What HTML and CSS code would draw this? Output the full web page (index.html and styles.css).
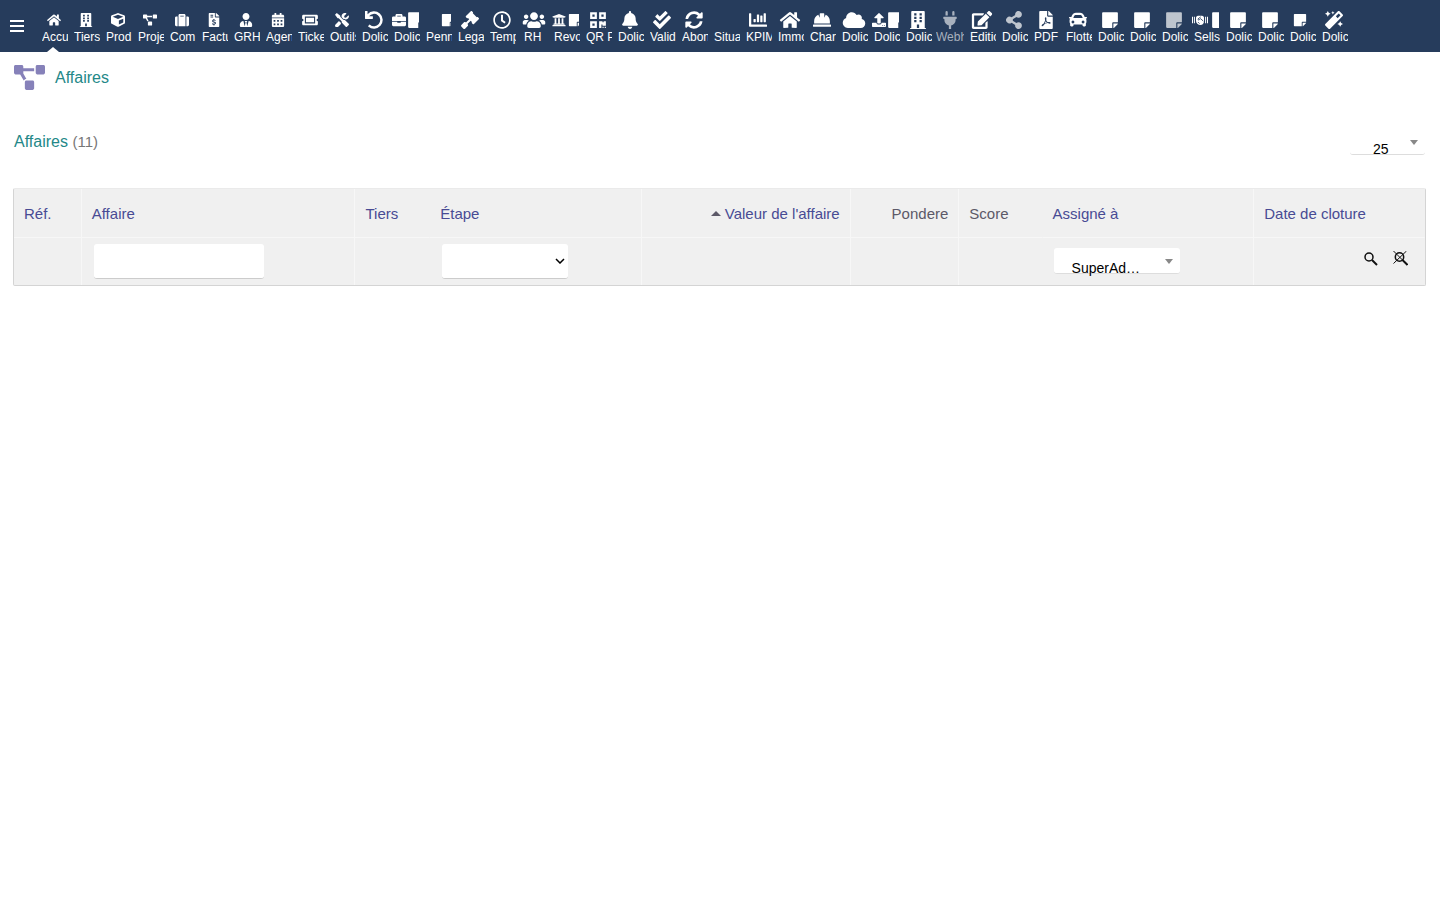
FILE: index.html
```html
<!DOCTYPE html>
<html lang="fr">
<head>
<meta charset="utf-8">
<title>Affaires</title>
<link rel="stylesheet" href="styles.css">
</head>
<body>
<svg class="sprite" aria-hidden="true">
<symbol id="home" viewBox="0 0 576 512"><path d="M280.37 148.26L96 300.11V464a16 16 0 0 0 16 16l112.06-.29a16 16 0 0 0 15.92-16V368a16 16 0 0 1 16-16h64a16 16 0 0 1 16 16v95.64a16 16 0 0 0 16 16.05L464 480a16 16 0 0 0 16-16V300L295.67 148.26a12.19 12.19 0 0 0-15.3 0zM571.6 251.47L488 182.56V44.05a12 12 0 0 0-12-12h-56a12 12 0 0 0-12 12v72.61L318.47 43a48 48 0 0 0-61 0L4.34 251.47a12 12 0 0 0-1.6 16.9l25.5 31A12 12 0 0 0 45.15 301l235.22-193.74a12.19 12.19 0 0 1 15.3 0L530.9 301a12 12 0 0 0 16.9-1.6l25.5-31a12 12 0 0 0-1.7-16.93z"/></symbol>
<symbol id="building" viewBox="0 0 448 512"><path fill-rule="evenodd" d="M436 480h-20V24c0-13-11-24-24-24H56C43 0 32 11 32 24v456H12c-7 0-12 5-12 12v20h448v-20c0-7-5-12-12-12zM116 64h64v64h-64zM116 160h64v64h-64zM116 256h64v64h-64zM268 64h64v64h-64zM268 160h64v64h-64zM268 256h64v64h-64zM192 480V384h64v96z"/></symbol>
<symbol id="cube" viewBox="0 0 512 512"><path d="M239.1 6.3l-208 78c-18.7 7-31.1 25-31.1 45v225.1c0 18.2 10.3 34.8 26.5 42.9l208 104c13.5 6.800 29.4 6.800 42.9 0l208-104c16.300-8.100 26.500-24.800 26.500-42.900V129.300c0-20-12.400-37.900-31.100-44.900l-208-78C262 2.200 250 2.200 239.100 6.300zM256 68.400l192 72v1.100l-192 78-192-78v-1.100l192-72zm32 356V275.500l160-65v133.900l-160 80z"/></symbol>
<symbol id="diagram" viewBox="0 0 640 512"><path d="M384 320H256c-17.67 0-32 14.33-32 32v128c0 17.67 14.33 32 32 32h128c17.67 0 32-14.33 32-32V352c0-17.67-14.33-32-32-32zM192 32c0-17.67-14.33-32-32-32H32C14.33 0 0 14.33 0 32v128c0 17.67 14.33 32 32 32h95.72l73.16 128.04C211.98 300.98 232.4 288 256 288h.28L192 175.51V128h224V64H192V32zM608 0H480c-17.67 0-32 14.33-32 32v128c0 17.67 14.33 32 32 32h128c17.67 0 32-14.33 32-32V32c0-17.67-14.33-32-32-32z"/></symbol>
<symbol id="suitcase" viewBox="0 0 512 512"><path d="M128 480h256V80c0-26.500-21.500-48-48-48H176c-26.500 0-48 21.500-48 48v400zm64-384h128v32H192V96zm320 80v256c0 26.500-21.500 48-48 48h-48V128h48c26.500 0 48 21.500 48 48zM96 480H48c-26.500 0-48-21.500-48-48V176c0-26.500 21.500-48 48-48h48v352z"/></symbol>
<symbol id="invoice" viewBox="0 0 384 512"><path d="M377 105L279 7c-4-5-11-7-17-7h-6v128h128v-6c0-6-2-12-7-17z"/><path fill-rule="evenodd" d="M224 136V0H24C11 0 0 11 0 24v464c0 13 11 24 24 24h336c13 0 24-11 24-24V160H248c-13 0-24-11-24-24zM64 64h96v32H64zM64 128h96v32H64zM172 216h36v28c22 2 38 9 48 16l-22 30c-20-14-68-20-68 2 0 27 98 12 98 78 0 32-24 52-56 56v30h-36v-30c-24-2-44-10-56-22l24-28c24 20 82 26 82-2 0-29-98-14-98-80 0-28 20-48 48-52z"/></symbol>
<symbol id="tie" viewBox="0 0 448 512"><path d="M224 256c70.700 0 128-57.300 128-128S294.700 0 224 0 96 57.300 96 128s57.300 128 128 128zm95.800 32.600L272 480l-32-136 32-56h-96l32 56-32 136-47.800-191.400C56.900 292 0 350.300 0 422.400V464c0 26.500 21.500 48 48 48h352c26.500 0 48-21.500 48-48v-41.600c0-72.100-56.900-130.400-128.200-133.800z"/></symbol>
<symbol id="calendar" viewBox="0 0 448 512"><path d="M448 112v48H0v-48c0-27 21-48 48-48h48V0h64v64h128V0h64v64h48c27 0 48 21 48 48z"/><path fill-rule="evenodd" d="M0 192h448v272c0 27-21 48-48 48H48c-27 0-48-21-48-48zM64 256h64v64H64zM192 256h64v64h-64zM320 256h64v64h-64zM64 384h64v64H64zM192 384h64v64h-64zM320 384h64v64h-64z"/></symbol>
<symbol id="ticket" viewBox="0 0 576 512"><path fill-rule="evenodd" d="M48 64h480c27 0 48 21 48 48v96a48 48 0 0 0 0 96v96c0 27-21 48-48 48H48c-27 0-48-21-48-48v-96a48 48 0 0 0 0-96v-96c0-27 21-48 48-48zM100 132v248h376V132zM140 172h296v168H140z"/></symbol>
<symbol id="tools" viewBox="0 0 512 512"><path d="M502 393L370 262c-18-18-44-24-68-16L192 136V96L64 0 0 64l96 128h40l110 110c-8 24-2 50 16 68l131 132c12 13 33 13 46 0l63-63c13-13 13-34 0-46z"/><path d="M508 110c-4-15-22-20-33-9l-75 74-56-10-9-56 74-75c11-11 6-29-9-33-58-13-112 9-142 55-18 31-22 67-13 100l65 65c19-5 39-5 57 3l20 10c75-2 134-57 121-124zM180 330l-34-34L19 423a64 64 0 0 0 90 90l116-116c-18-20-22-40-20-62z"/></symbol>
<symbol id="undo" viewBox="0 0 512 512"><path d="M212 224H12c-7 0-12-5-12-12V12C0 5 5 0 12 0h48c7 0 12 5 12 12v78A248 248 0 1 1 90 441c-5-5-5-13 0-17l34-34c5-4 12-4 17 0a176 176 0 1 0-26-238h97c7 0 12 5 12 12v48c0 7-5 12-12 12z"/></symbol>
<symbol id="briefcase" viewBox="0 0 512 512"><path fill-rule="evenodd" d="M384 128V80c0-27-21-48-48-48H176c-27 0-48 21-48 48v48H48c-27 0-48 21-48 48v112h512V176c0-27-21-48-48-48zM192 96h128v32H192zM320 320v24c0 4-4 8-8 8H200c-4 0-8-4-8-8v-24H0v112c0 27 21 48 48 48h416c27 0 48-21 48-48V320z"/></symbol>
<symbol id="note" viewBox="0 0 448 512"><path d="M312 320h136V56c0-13-11-24-24-24H24C11 32 0 43 0 56v400c0 13 11 24 24 24h264V344c0-13 11-24 24-24zm129 55l-98 98c-4 5-11 7-17 7h-6V352h128v6c0 6-3 12-7 17z"/></symbol>
<symbol id="gavel" viewBox="0 0 512 512"><path d="M505 200l-23-23c-9-9-24-10-34-1L336 64c9-10 8-25-1-34L312 7c-9-9-25-9-34 0L142 143c-9 9-9 25 0 34l23 23c9 9 24 10 34 1l35 35L141 330l-9-9c-13-13-34-13-46 0L10 397c-13 13-13 33 0 46l59 59c13 13 33 13 46 0l76-76c13-12 13-33 0-46l-9-9 94-93 35 35c-9 10-8 25 1 34l23 23c9 9 25 9 34 0l136-136c9-9 9-25 0-34z"/></symbol>
<symbol id="clock" viewBox="0 0 512 512"><path d="M256 8C119 8 8 119 8 256s111 248 248 248 248-111 248-248S393 8 256 8zm0 448c-110.500 0-200-89.500-200-200S145.500 56 256 56s200 89.500 200 200-89.500 200-200 200zm61.800-104.400l-84.900-61.700c-3.100-2.300-4.900-5.900-4.900-9.700V116c0-6.600 5.400-12 12-12h32c6.600 0 12 5.400 12 12v141.700l66.800 48.600c5.400 3.900 6.500 11.400 2.600 16.800L334.600 349c-3.900 5.300-11.400 6.500-16.800 2.600z"/></symbol>
<symbol id="users" viewBox="0 0 640 512"><path d="M96 224c35.300 0 64-28.700 64-64s-28.700-64-64-64-64 28.700-64 64 28.700 64 64 64zm448 0c35.300 0 64-28.700 64-64s-28.700-64-64-64-64 28.700-64 64 28.700 64 64 64zm32 32h-64c-17.600 0-33.500 7.100-45.100 18.600 40.300 22.100 68.900 62 75.100 109.400h66c17.700 0 32-14.300 32-32v-32c0-35.300-28.700-64-64-64zm-256 0c61.900 0 112-50.100 112-112S381.900 32 320 32 208 82.100 208 144s50.100 112 112 112zm76.800 32h-8.300c-20.800 10-43.900 16-68.500 16s-47.600-6-68.500-16h-8.300C179.600 288 128 339.600 128 403.200V432c0 26.500 21.500 48 48 48h288c26.500 0 48-21.500 48-48v-28.800c0-63.600-51.600-115.200-115.200-115.200zm-223.700-13.400C161.500 263.100 145.600 256 128 256H64c-35.300 0-64 28.700-64 64v32c0 17.700 14.300 32 32 32h65.900c6.300-47.400 34.900-87.300 75.200-109.400z"/></symbol>
<symbol id="bank" viewBox="0 0 512 512"><path d="M496 128v16c0 4-4 8-8 8h-24v12c0 7-5 12-12 12H60c-7 0-12-5-12-12v-12H24c-4 0-8-4-8-8v-16L256 32zM472 432H40c-13 0-24 11-24 24v24h480v-24c0-13-11-24-24-24zM96 192v192H60v32h392v-32h-36V192h-64v192h-64V192h-64v192h-64V192z"/></symbol>
<symbol id="qr" viewBox="0 0 448 512"><path fill-rule="evenodd" d="M0 32h192v192H0zM64 96v64h64V96zM256 32h192v192H256zM320 96v64h64V96zM0 288h192v192H0zM64 352v64h64v-64zM256 288h96v32h32v-32h64v128h-96v-32h-32v96h-64zM352 448h32v32h-32zM416 448h32v32h-32z"/></symbol>
<symbol id="bell" viewBox="0 0 448 512"><path d="M224 512c35 0 64-29 64-64H160c0 35 29 64 64 64zm215-150c-19-20-55-51-55-154 0-77-54-139-128-154V32a32 32 0 0 0-64 0v22C118 69 64 131 64 208c0 103-36 134-55 154-6 7-9 14-9 22 0 16 13 32 32 32h384c19 0 32-16 32-32 0-8-3-15-9-22z"/></symbol>
<symbol id="checks" viewBox="0 0 512 512"><path d="M505 174.800l-39.600-39.600c-9.400-9.400-24.600-9.400-33.900 0L192 374.700 80.600 263.200c-9.400-9.400-24.600-9.400-33.900 0L7 302.900c-9.400 9.400-9.400 24.600 0 34L175 505c9.400 9.400 24.600 9.400 33.900 0l296-296.200c9.400-9.500 9.400-24.700.1-34zm-324.300 106c6.200 6.300 16.400 6.300 22.600 0l208-208.200c6.200-6.300 6.200-16.400 0-22.600L366.100 4.700c-6.200-6.300-16.400-6.300-22.600 0L192 156.200l-55.400-55.500c-6.200-6.300-16.400-6.300-22.600 0L68.700 146c-6.200 6.300-6.200 16.400 0 22.600l112 112.200z"/></symbol>
<symbol id="sync" viewBox="0 0 512 512"><path d="M371 133a168 168 0 0 0-277 82c-1 5-6 9-12 9H25c-8 0-13-7-12-14A248 248 0 0 1 426 79l36-36c15-15 41-5 41 17v132c0 13-11 24-24 24H347c-22 0-32-26-17-41zM33 296h132c22 0 32 26 17 41l-41 42a168 168 0 0 0 277-82c1-5 6-9 12-9h57c8 0 13 7 12 14A248 248 0 0 1 86 433l-36 36c-15 15-41 5-41-17V320c0-13 11-24 24-24z"/></symbol>
<symbol id="chart" viewBox="0 0 512 512"><path d="M333 320h38c6 0 13-6 13-13V141c0-7-7-13-13-13h-38c-7 0-13 6-13 13v166c0 7 6 13 13 13zm96 0h38c7 0 13-6 13-13V77c0-7-6-13-13-13h-38c-7 0-13 6-13 13v230c0 7 6 13 13 13zm-288 0h38c7 0 13-6 13-13v-70c0-7-6-13-13-13h-38c-7 0-13 6-13 13v70c0 7 6 13 13 13zm96 0h38c7 0 13-6 13-13V109c0-7-6-13-13-13h-38c-7 0-13 6-13 13v198c0 7 6 13 13 13zm259 64H64V80c0-9-7-16-16-16H16C7 64 0 71 0 80v336c0 18 14 32 32 32h464c9 0 16-7 16-16v-32c0-9-7-16-16-16z"/></symbol>
<symbol id="hat" viewBox="0 0 512 512"><path d="M480 288c0-80-49-149-119-178l-41 82V80c0-9-7-16-16-16h-96c-9 0-16 7-16 16v112l-41-82C81 139 32 208 32 288v64h448zm16 96H16c-9 0-16 7-16 16v32c0 9 7 16 16 16h480c9 0 16-7 16-16v-32c0-9-7-16-16-16z"/></symbol>
<symbol id="cloud" viewBox="0 0 640 512"><path d="M537.600 226.600c4.100-10.700 6.400-22.400 6.400-34.600 0-53-43-96-96-96-19.700 0-38.100 6-53.300 16.200C367 64.200 315.300 32 256 32c-88.400 0-160 71.600-160 160 0 2.700.1 5.400.2 8.100C40.200 219.800 0 273.200 0 336c0 79.500 64.500 144 144 144h368c70.700 0 128-57.300 128-128 0-61.900-44-113.600-102.400-125.400z"/></symbol>
<symbol id="upload" viewBox="0 0 512 512"><path fill-rule="evenodd" d="M296 384h-80c-13 0-24-11-24-24V192h-88c-18 0-27-21-14-34L242 6c7-8 21-8 28 0l152 152c13 13 4 34-14 34h-88v168c0 13-11 24-24 24zm216-8v112c0 13-11 24-24 24H24c-13 0-24-11-24-24V376c0-13 11-24 24-24h136v8c0 31 25 56 56 56h80c31 0 56-25 56-56v-8h136c13 0 24 11 24 24zM378 450h28v28h-28zM438 450h28v28h-28z"/></symbol>
<symbol id="plug" viewBox="0 0 384 512"><path d="M320 32a32 32 0 0 0-64 0v96h64zm48 128H16c-9 0-16 7-16 16v32c0 9 7 16 16 16h16v32c0 77 55 142 128 157v99h64v-99c73-15 128-80 128-157v-32h16c9 0 16-7 16-16v-32c0-9-7-16-16-16zM128 32a32 32 0 0 0-64 0v96h64z"/></symbol>
<symbol id="edit" viewBox="0 0 576 512"><path d="M402.600 83.200l90.200 90.200c3.800 3.800 3.800 10 0 13.800L274.400 405.600l-92.800 10.300c-12.400 1.400-22.900-9.100-21.500-21.500l10.300-92.800L388.800 83.200c3.800-3.800 10-3.800 13.800 0zm162-22.900l-48.800-48.800c-15.200-15.200-39.900-15.200-55.200 0l-35.400 35.400c-3.800 3.800-3.800 10 0 13.800l90.200 90.200c3.800 3.800 10 3.800 13.800 0l35.400-35.400c15.200-15.300 15.200-40 0-55.200zM384 346.200V448H64V128h229.800c3.200 0 6.200-1.300 8.500-3.500l40-40c7.600-7.600 2.200-20.500-8.500-20.500H48C21.500 64 0 85.500 0 112v352c0 26.500 21.500 48 48 48h352c26.500 0 48-21.500 48-48V306.200c0-10.700-12.900-16-20.500-8.500l-40 40c-2.200 2.300-3.500 5.300-3.500 8.500z"/></symbol>
<symbol id="share" viewBox="0 0 448 512"><path d="M352 320c-23 0-43 8-60 21l-102-64a96 96 0 0 0 0-42l102-64c17 13 37 21 60 21a96 96 0 1 0-94-75l-102 64a96 96 0 1 0 0 150l102 64a96 96 0 1 0 94-75z"/></symbol>
<symbol id="pdf" viewBox="0 0 384 512"><path d="M377 105L279 7c-4-5-11-7-17-7h-6v128h128v-6c0-6-2-12-7-17z"/><path fill-rule="evenodd" d="M224 136V0H24C11 0 0 11 0 24v464c0 13 11 24 24 24h336c13 0 24-11 24-24V160H248c-13 0-24-11-24-24zM175 180c34-2 34 36 24 80 12 30 28 48 46 58 34-4 76-4 79 22 2 30-42 26-80 2l-86 20c-26 46-62 84-83 70-25-18 15-60 54-76 17-28 31-62 40-90-11-36-14-78 6-86zM184 292l-23 54 57-15c-14-12-26-25-34-39z"/></symbol>
<symbol id="car" viewBox="0 0 512 512"><path fill-rule="evenodd" d="M500 168h-55l-16-41c-19-47-64-79-115-79H198c-51 0-96 32-115 79l-16 41H12c-8 0-14 7-12 15l6 24c1 5 6 9 12 9h20c-14 12-22 28-22 48v48c0 16 6 31 16 42v54c0 18 14 32 32 32h32c18 0 32-14 32-32v-24h256v24c0 18 14 32 32 32h32c18 0 32-14 32-32v-54c10-11 16-26 16-42v-48c0-20-8-36-22-48h20c6 0 11-4 12-9l6-24c2-8-4-15-12-15zM142 151c9-24 32-39 56-39h116c24 0 47 15 56 39l20 49H122zM112 272a40 40 0 1 0 .1 0zM400 272a40 40 0 1 0 .1 0z"/></symbol>
<symbol id="shake" viewBox="0 0 640 512"><path d="M0 128h44v256H0zM596 128h44v256h-44zM80 128h36v256H80zM524 128h36v256h-36z"/><path d="M240 84h160c50 0 80 40 80 90v130c0 80-60 150-140 150-100 0-180-80-180-160V170c0-46 34-86 80-86z"/><path d="M350 130l-110 84c-14 40 34 50 60 24l46-34 110 100M240 340l60 60" fill="none" stroke="#263c5c" stroke-width="34"/></symbol>
<symbol id="magic" viewBox="0 0 512 512"><path d="M224 96l16-32 32-16-32-16L224 0l-16 32-32 16 32 16zM80 160l27-53 53-27-53-27L80 0 53 53 0 80l53 27zm352 128l-27 53-53 27 53 27 27 53 27-53 53-27-53-27z"/><path fill-rule="evenodd" d="M503 99L413 9c-13-12-33-12-46 0L9 367c-12 13-12 33 0 46l90 90c13 12 33 12 46 0l358-358c12-13 12-33 0-46zM360 203l-51-51 81-81 51 51z"/></symbol>
</svg>

<header class="topbar">
<button class="burger" aria-label="Menu"><span></span><span></span><span></span></button>
<nav class="menu">
<a href="#" class="item current"><span class="ico"><svg class="s"><use href="#home"/></svg></span><span class="lbl">Accu</span></a>
<a href="#" class="item"><span class="ico"><svg class="s"><use href="#building"/></svg></span><span class="lbl">Tiers</span></a>
<a href="#" class="item"><span class="ico"><svg class="s"><use href="#cube"/></svg></span><span class="lbl">Prod</span></a>
<a href="#" class="item"><span class="ico"><svg class="s"><use href="#diagram"/></svg></span><span class="lbl">Proje</span></a>
<a href="#" class="item"><span class="ico"><svg class="s"><use href="#suitcase"/></svg></span><span class="lbl">Com</span></a>
<a href="#" class="item"><span class="ico"><svg class="s"><use href="#invoice"/></svg></span><span class="lbl">Factu</span></a>
<a href="#" class="item"><span class="ico"><svg class="s"><use href="#tie"/></svg></span><span class="lbl">GRH</span></a>
<a href="#" class="item"><span class="ico"><svg class="s"><use href="#calendar"/></svg></span><span class="lbl">Agen</span></a>
<a href="#" class="item"><span class="ico"><svg class="m"><use href="#ticket"/></svg></span><span class="lbl">Ticke</span></a>
<a href="#" class="item"><span class="ico"><svg class="s"><use href="#tools"/></svg></span><span class="lbl">Outils</span></a>
<a href="#" class="item"><span class="ico"><svg class="l"><use href="#undo"/></svg></span><span class="lbl">Dolic</span></a>
<a href="#" class="item"><span class="ico pair"><svg class="s"><use href="#briefcase"/></svg><svg class="l"><use href="#note"/></svg></span><span class="lbl">Dolic</span></a>
<a href="#" class="item"><span class="ico late"><svg class="s"><use href="#note"/></svg></span><span class="lbl">Penn</span></a>
<a href="#" class="item"><span class="ico"><svg class="l"><use href="#gavel"/></svg></span><span class="lbl">Lega</span></a>
<a href="#" class="item"><span class="ico"><svg class="l"><use href="#clock"/></svg></span><span class="lbl">Temp</span></a>
<a href="#" class="item"><span class="ico"><svg class="l"><use href="#users"/></svg></span><span class="lbl short">RH</span></a>
<a href="#" class="item"><span class="ico pair wide"><svg class="s"><use href="#bank"/></svg><svg class="s"><use href="#note"/></svg></span><span class="lbl">Revo</span></a>
<a href="#" class="item"><span class="ico"><svg class="l"><use href="#qr"/></svg></span><span class="lbl">QR P</span></a>
<a href="#" class="item"><span class="ico"><svg class="l"><use href="#bell"/></svg></span><span class="lbl">Dolic</span></a>
<a href="#" class="item"><span class="ico"><svg class="l"><use href="#checks"/></svg></span><span class="lbl">Valid</span></a>
<a href="#" class="item"><span class="ico"><svg class="l"><use href="#sync"/></svg></span><span class="lbl">Abon</span></a>
<a href="#" class="item"><span class="ico"></span><span class="lbl">Situa</span></a>
<a href="#" class="item"><span class="ico"><svg class="l"><use href="#chart"/></svg></span><span class="lbl">KPIM</span></a>
<a href="#" class="item"><span class="ico"><svg class="l"><use href="#home"/></svg></span><span class="lbl">Immo</span></a>
<a href="#" class="item"><span class="ico"><svg class="l"><use href="#hat"/></svg></span><span class="lbl">Char</span></a>
<a href="#" class="item"><span class="ico"><svg class="l"><use href="#cloud"/></svg></span><span class="lbl">Dolic</span></a>
<a href="#" class="item"><span class="ico pair"><svg class="s"><use href="#upload"/></svg><svg class="l"><use href="#note"/></svg></span><span class="lbl">Dolic</span></a>
<a href="#" class="item"><span class="ico"><svg class="l"><use href="#building"/></svg></span><span class="lbl">Dolic</span></a>
<a href="#" class="item off"><span class="ico"><svg class="l"><use href="#plug"/></svg></span><span class="lbl">Webh</span></a>
<a href="#" class="item"><span class="ico"><svg class="l"><use href="#edit"/></svg></span><span class="lbl">Editio</span></a>
<a href="#" class="item"><span class="ico dim"><svg class="l"><use href="#share"/></svg></span><span class="lbl">Dolic</span></a>
<a href="#" class="item"><span class="ico"><svg class="l"><use href="#pdf"/></svg></span><span class="lbl">PDF</span></a>
<a href="#" class="item"><span class="ico"><svg class="l"><use href="#car"/></svg></span><span class="lbl">Flotte</span></a>
<a href="#" class="item"><span class="ico"><svg class="l"><use href="#note"/></svg></span><span class="lbl">Dolic</span></a>
<a href="#" class="item"><span class="ico"><svg class="l"><use href="#note"/></svg></span><span class="lbl">Dolic</span></a>
<a href="#" class="item"><span class="ico dim"><svg class="l"><use href="#note"/></svg></span><span class="lbl">Dolic</span></a>
<a href="#" class="item"><span class="ico pair wide"><svg class="m"><use href="#shake"/></svg><svg class="l"><use href="#note"/></svg></span><span class="lbl">Sells</span></a>
<a href="#" class="item"><span class="ico"><svg class="l"><use href="#note"/></svg></span><span class="lbl">Dolic</span></a>
<a href="#" class="item"><span class="ico"><svg class="l"><use href="#note"/></svg></span><span class="lbl">Dolic</span></a>
<a href="#" class="item"><span class="ico small"><svg class="s"><use href="#note"/></svg></span><span class="lbl">Dolic</span></a>
<a href="#" class="item"><span class="ico"><svg class="l"><use href="#magic"/></svg></span><span class="lbl">Dolic</span></a>
</nav>
</header>

<main class="page">
<div class="title"><svg viewBox="0 0 640 512" aria-hidden="true"><use href="#diagram"/></svg><h1>Affaires</h1></div>
<div class="listbar">
<h2>Affaires <span>(11)</span></h2>
<div class="pick limit"><select aria-label="Lignes par page"><option>25</option></select></div>
</div>
<form>
<table class="list">
<colgroup><col class="c-ref"><col class="c-name"><col class="c-tiers"><col class="c-step"><col class="c-value"><col class="c-weight"><col class="c-score"><col class="c-user"><col class="c-date"></colgroup>
<thead>
<tr><th><a href="#">Réf.</a></th><th><a href="#">Affaire</a></th><th class="open"><a href="#">Tiers</a></th><th><a href="#">Étape</a></th><th class="num"><span class="asc"></span><a href="#">Valeur de l'affaire</a></th><th class="num">Pondere</th><th class="open">Score</th><th><a href="#">Assigné à</a></th><th><a href="#">Date de cloture</a></th></tr>
</thead>
<tbody>
<tr><td></td><td><input class="field name" type="text" aria-label="Affaire"></td><td class="open"></td><td><div class="step"><select class="field" aria-label="Étape"><option></option></select><svg viewBox="0 0 10 6" aria-hidden="true"><path d="M1 1l4 4 4-4"/></svg></div></td><td></td><td></td><td class="open"></td><td><div class="pick user"><select aria-label="Assigné à"><option>SuperAd…</option></select></div></td>
<td><div class="actions"><button type="button" aria-label="Rechercher"><svg viewBox="0 0 16 16"><circle cx="7" cy="6" r="4"/><path class="handle" d="M10 9l5 5"/></svg></button><button type="button" aria-label="Effacer"><svg viewBox="0 0 16 16"><circle cx="7.500" cy="6" r="4.200"/><path class="handle" d="M10.500 9l5 5"/><path class="thin" d="M1.500 0l12 12M14.500 0l-13 12.500"/></svg></button></div></td></tr>
</tbody>
</table>
</form>
</main>
</body>
</html>
```

FILE: styles.css
```css
* { box-sizing: border-box; }
body { margin: 0; background: #fff; color: #000; font: 15px/20px "Liberation Sans", Arial, sans-serif; }
a { color: inherit; text-decoration: none; }
button, input, select { font: inherit; color: inherit; border: 0; margin: 0; padding: 0; }
h1, h2 { margin: 0; font-size: 16px; font-weight: 400; color: #238888; }
.sprite { display: none; }

.topbar { display: flex; height: 52px; background: #263c5c; color: #fff; overflow: hidden; }
.burger { display: flex; flex-direction: column; justify-content: center; gap: 3px; width: 42px; flex: none; padding-left: 10px; background: none; }
.burger span { width: 14px; height: 2px; background: #fff; }
.menu { display: flex; }
.item { position: relative; flex: none; width: 32px; padding-top: 11px; }
.item.off { color: #a8b1be; }
.item.off .lbl { margin-left: -2px; width: 28px; }
.current::after { content: ""; position: absolute; left: 5px; bottom: 0; border: solid transparent; border-width: 0 6px 5px; border-bottom-color: #fff; }
.ico { display: flex; align-items: center; justify-content: center; width: 28px; height: 18px; margin: 0 0 1px -2px; }
.ico svg { flex: none; fill: currentColor; }
.ico .s { width: 14px; height: 14px; }
.ico .m { width: 16px; height: 14px; }
.ico .l { width: 24px; height: 18px; }
.ico.dim { opacity: .7; }
.ico.small { width: 24px; }
.ico.pair, .ico.late { justify-content: flex-start; overflow: hidden; width: 27px; }
.ico.pair { gap: 2px; }
.ico.pair .l { width: 16px; }
.ico.pair.wide { gap: 2px; }
.ico.pair .m + .l { margin-left: 2px; }
.ico.late { padding-left: 17px; }
.lbl { display: block; width: 26px; overflow: hidden; white-space: nowrap; font-size: 12px; line-height: 14px; }
.lbl.short { padding-left: 2px; }

.page { padding: 12px 14px 0 13px; }
.title { display: flex; align-items: center; gap: 10px; height: 27px; padding-left: 1px; }
.title svg { width: 31px; height: 25px; fill: #8681b9; }
.listbar { display: flex; justify-content: space-between; align-items: center; height: 26px; margin: 38px 0 33px; padding: 0 1px; }
.listbar span { font-size: 15px; color: #777; }

.pick { position: relative; background: #fff; border-bottom: 1px solid #ddd; border-radius: 3px; height: 26px; }
.pick select { appearance: none; display: block; width: 100%; height: 31px; padding-top: 9px; background: none; font-size: 14px; }
.pick::after { content: ""; position: absolute; right: 7px; top: 11px; border: solid transparent; border-width: 5px 4px 0; border-top-color: #888; pointer-events: none; }
.limit { width: 75px; }
.limit select { padding-left: 23px; }
.user { width: 126px; margin: 0 1px; }
.user select { padding-left: 18px; }

.list { width: 100%; table-layout: fixed; border-collapse: separate; border-spacing: 0; background: #f0f0f0; border: 1px solid #d4d4d4; border-top-color: #eaeaea; border-radius: 2px; }
.c-ref { width: 4.8%; } .c-name { width: 19.4%; } .c-tiers { width: 5.3%; } .c-step { width: 15%; } .c-value { width: 14.8%; }
.c-weight { width: 7.7%; } .c-score { width: 5.9%; } .c-user { width: 15%; } .c-date { width: 12.1%; }
.list th, .list td { height: 47px; padding: 0 10px 1px; border-right: 1px solid #f7f7f7; text-align: left; font-weight: 400; white-space: nowrap; }
.list th { height: 49px; padding: 2px 10px 0 10px; border-bottom: 1px solid #f7f7f7; color: #5c5968; }
.list th a { color: #484b94; }
.list .open, .list tr > :last-child { border-right-color: transparent; }
.list .num { text-align: right; }
.asc { display: inline-block; margin-right: 4px; vertical-align: 3px; border: solid transparent; border-width: 0 5px 5px; border-bottom-color: #5c5968; }
.field { display: block; height: 35px; background: #fff; border-bottom: 1px solid #ccc; border-radius: 3px; }
.name { width: 170px; margin-left: 2px; padding: 0 6px; }
.step { position: relative; width: 126px; margin-left: 2px; }
.step .field { appearance: none; width: 100%; }
.step svg { position: absolute; right: 3px; top: 14px; width: 10px; height: 6px; fill: none; stroke: #000; stroke-width: 1.5; pointer-events: none; }
.actions { display: flex; justify-content: flex-end; gap: 14px; padding: 0 6px 4px 0; }
.actions button { width: 16px; height: 16px; background: none; }
.actions svg { display: block; width: 16px; height: 16px; fill: none; stroke: #111; stroke-width: 1.5; }
.actions .handle { stroke-width: 2; }
.actions .thin { stroke-width: 1; }
```
